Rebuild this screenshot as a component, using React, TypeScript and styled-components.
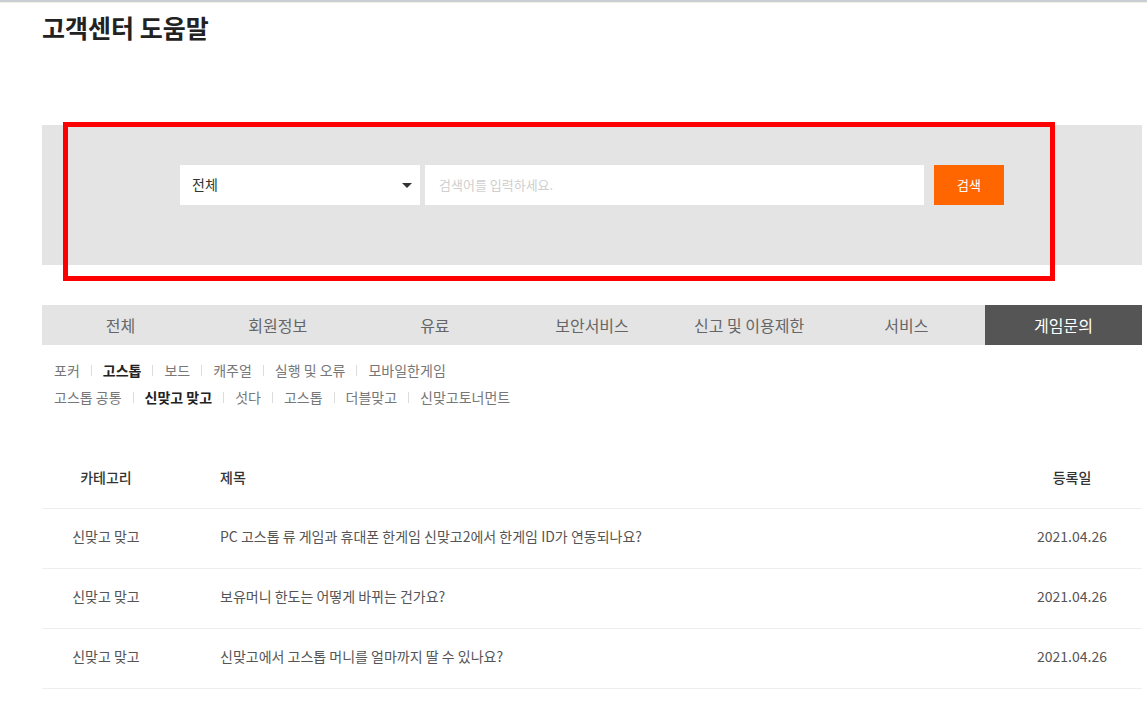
import React from "react";
import styled, { createGlobalStyle } from "styled-components";

const GlobalStyle = createGlobalStyle`
  html, body {
    margin: 0;
    padding: 0;
    background: #fff;
  }
  body {
    font-family: "Noto Sans CJK KR", "Noto Sans", sans-serif;
    color: #333;
    border-top: 2px solid #c9cdd4;
    box-shadow: inset 0 1px 0 #f3f1e4;
  }
  * {
    box-sizing: border-box;
  }
`;

type CategoryType = {
  name: string;
  active?: boolean;
};

type FaqType = {
  category: string;
  title: string;
  date: string;
};

const tabs = ["전체", "회원정보", "유료", "보안서비스", "신고 및 이용제한", "서비스", "게임문의"];

const games: CategoryType[] = [
  { name: "포커" },
  { name: "고스톱", active: true },
  { name: "보드" },
  { name: "캐주얼" },
  { name: "실행 및 오류" },
  { name: "모바일한게임" },
];

const gostop: CategoryType[] = [
  { name: "고스톱 공통" },
  { name: "신맞고 맞고", active: true },
  { name: "섯다" },
  { name: "고스톱" },
  { name: "더블맞고" },
  { name: "신맞고토너먼트" },
];

const faqs: FaqType[] = [
  {
    category: "신맞고 맞고",
    title: "PC 고스톱 류 게임과 휴대폰 한게임 신맞고2에서 한게임 ID가 연동되나요?",
    date: "2021.04.26",
  },
  { category: "신맞고 맞고", title: "보유머니 한도는 어떻게 바뀌는 건가요?", date: "2021.04.26" },
  { category: "신맞고 맞고", title: "신맞고에서 고스톱 머니를 얼마까지 딸 수 있나요?", date: "2021.04.26" },
];

const SubList = (props: { items: CategoryType[] }) => {
  return (
    <SubRow>
      {props.items.map((item, i) => (
        <React.Fragment key={item.name + i}>
          {i > 0 && <Divider />}
          <SubItem active={item.active}>{item.name}</SubItem>
        </React.Fragment>
      ))}
    </SubRow>
  );
};

export default function App() {
  return (
    <Page>
      <GlobalStyle />
      <Title>고객센터 도움말</Title>

      <SearchArea>
        <SearchForm>
          <Select>
            <span>전체</span>
            <Arrow />
          </Select>
          <Input placeholder="검색어를 입력하세요." />
          <SearchButton>검색</SearchButton>
        </SearchForm>
        <Highlight />
      </SearchArea>

      <Tabs>
        {tabs.map((t, i) => (
          <Tab key={t} active={i === tabs.length - 1}>
            {t}
          </Tab>
        ))}
      </Tabs>

      <SubMenu>
        <SubList items={games} />
        <SubList items={gostop} />
      </SubMenu>

      <Table>
        <HeadRow>
          <CategoryCell>카테고리</CategoryCell>
          <TitleCell>제목</TitleCell>
          <DateCell>등록일</DateCell>
        </HeadRow>
        {faqs.map((f, i) => (
          <Row key={i}>
            <CategoryCell>{f.category}</CategoryCell>
            <TitleCell>{f.title}</TitleCell>
            <DateCell>{f.date}</DateCell>
          </Row>
        ))}
      </Table>
    </Page>
  );
}

const Page = styled.div`
  width: 1142px;
  padding-left: 42px;
`;

const Title = styled.h1`
  margin: 0;
  padding-top: 8px;
  height: 123px;
  font-size: 25px;
  font-weight: 700;
  line-height: 34px;
  color: #222;
`;

const SearchArea = styled.div`
  position: relative;
  height: 140px;
  background: #e4e4e4;
  padding: 40px 138px 0;
`;

const SearchForm = styled.div`
  display: flex;
  height: 40px;
`;

const Select = styled.div`
  width: 240px;
  height: 40px;
  background: #fff;
  display: flex;
  align-items: center;
  justify-content: space-between;
  padding: 0 8px 2px 12px;
  font-size: 14px;
  color: #333;
`;

const Arrow = styled.span`
  width: 0;
  height: 0;
  border-left: 5px solid transparent;
  border-right: 5px solid transparent;
  border-top: 5px solid #333;
  margin-top: 3px;
`;

const Input = styled.input`
  width: 499px;
  height: 40px;
  margin-left: 5px;
  border: 0;
  outline: none;
  padding: 0 14px 2px;
  font-family: "Noto Sans CJK KR", "Noto Sans", sans-serif;
  font-size: 13px;
  background: #fff;

  &::placeholder {
    color: #cfcfcf;
  }
`;

const SearchButton = styled.button`
  width: 70px;
  height: 40px;
  margin-left: 10px;
  border: 0;
  background: #ff6600;
  color: #fff;
  font-family: "Noto Sans CJK KR", "Noto Sans", sans-serif;
  font-size: 13px;
  padding: 0 0 2px;
`;

// red annotation frame lying over the search area
const Highlight = styled.div`
  position: absolute;
  left: 21px;
  top: -3px;
  width: 992px;
  height: 159px;
  border: 5px solid #ff0000;
  pointer-events: none;
`;

const Tabs = styled.div`
  display: grid;
  grid-template-columns: repeat(7, 1fr);
  margin-top: 40px;
  height: 40px;
  background: #e4e4e4;
`;

const Tab = styled.div<{ active?: boolean }>`
  display: flex;
  align-items: center;
  justify-content: center;
  padding-bottom: 1px;
  font-size: 16px;
  color: ${(props) => (props.active ? "#fff" : "#666")};
  background: ${(props) => (props.active ? "#555" : "transparent")};
`;

const SubMenu = styled.div`
  padding: 11px 0 0 12px;
  height: 100px;
`;

const SubRow = styled.div`
  display: flex;
  align-items: center;
  height: 27px;
  font-size: 14px;
`;

const SubItem = styled.span<{ active?: boolean }>`
  color: ${(props) => (props.active ? "#222" : "#777")};
  font-weight: ${(props) => (props.active ? 600 : 400)};
`;

const Divider = styled.span`
  display: inline-block;
  width: 1px;
  height: 11px;
  background: #dcdcdc;
  margin: 1px 11px 0;
`;

const Table = styled.div`
  display: flex;
  flex-direction: column;
`;

const Row = styled.div`
  display: grid;
  grid-template-columns: 128px 1fr 140px;
  align-items: center;
  height: 60px;
  padding-bottom: 6px;
  border-bottom: 1px solid #eeeeee;
  font-size: 14px;
  color: #555;
`;

const HeadRow = styled(Row)`
  height: 64px;
  padding-bottom: 0;
  color: #333;
  font-weight: 500;
`;

const CategoryCell = styled.div`
  text-align: center;
`;

const TitleCell = styled.div`
  padding-left: 50px;
`;

const DateCell = styled.div`
  text-align: center;
`;
